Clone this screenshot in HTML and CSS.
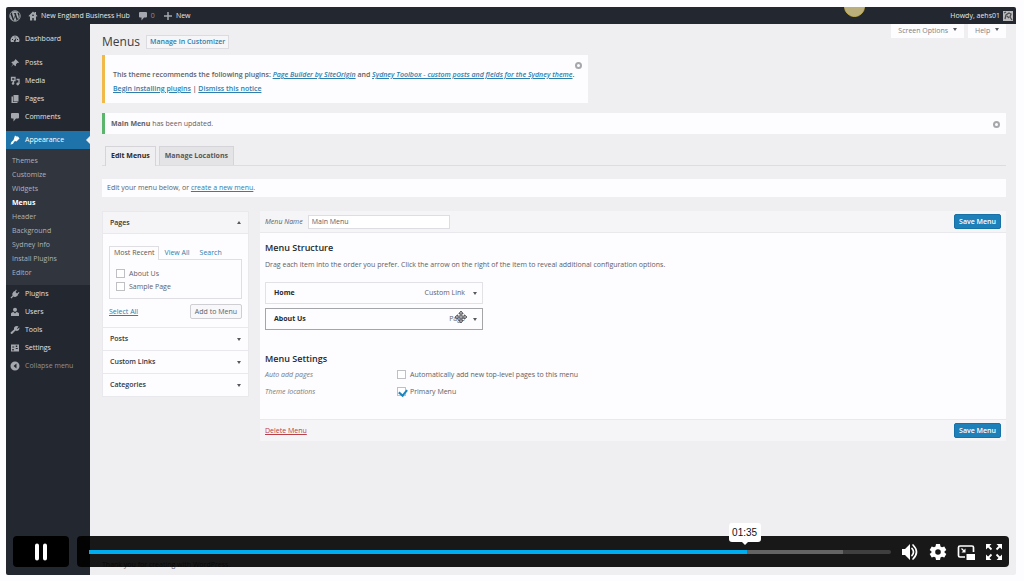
FILE: index.html
```html
<!DOCTYPE html>
<html lang="en">
<head>
<meta charset="utf-8">
<title>Menus - New England Business Hub</title>
<meta name="viewport" content="width=device-width, initial-scale=1">
<link rel="stylesheet" href="styles.css">
</head>
<body>
<div class="player">
  <header class="adminbar">
    <a class="bar-item bar-logo" href="#" aria-label="WordPress"><svg class="logo" viewBox="0 0 20 20"><circle cx="10" cy="10" r="8.800" fill="none" stroke="currentColor" stroke-width="1.400"/><path fill="currentColor" d="M2.600 7l4 10.800A8 8 0 0 1 2.600 7zM4 5a7.500 7.500 0 0 1 11.500-.8c-1.500.3-1.500 1.800-.7 3 .9 1.400 1 2.600.5 4.300l-1 3-3-9h1V4.800H7.500v.7h1l1.300 3.500-1.900 5.500-3-9h1V5zM10.200 11l2.500 6.500q-2.500 1-5 .2zM17 6.500q1.800 6.500-3 10.300l2.500-7.200q.6-1.600.5-3.100z"/></svg></a>
    <a class="bar-item bar-site" href="#"><svg class="ico" viewBox="0 0 20 20"><path fill="currentColor" fill-rule="evenodd" d="M10 1l3 3V2h3v5l3 3-1.500 1.500L16 10v9h-4.500v-5h-3v5H4v-9l-1.500 1.500L1 10zM10 6.500L8.500 8v2h3V8z"/></svg>New England Business Hub</a>
    <a class="bar-item bar-comments" href="#"><svg class="ico" viewBox="0 0 20 20"><path fill="currentColor" d="M4 2h12q2 0 2 2v7q0 2-2 2h-4l-5 6v-6H4q-2 0-2-2V4q0-2 2-2z"/></svg><span class="dim">0</span></a>
    <a class="bar-item" href="#"><svg class="ico" viewBox="0 0 20 20"><path fill="currentColor" d="M8.500 2h3v6.500H18v3h-6.500V18h-3v-6.500H2v-3h6.500z"/></svg>New</a>
    <a class="bar-item bar-user" href="#">Howdy, aehs01<svg class="avatar" viewBox="0 0 10 10"><path fill="#b9b9bb" d="M0 0h10v10H0z"/><path d="M2 8l1-4 3-2 2 1-1 3 2 3M1 2l2-1M4 5l2 2" fill="none" stroke="#4b4e52" stroke-width="1.300"/></svg></a>
    <span class="pointer-dot"></span>
  </header>
  <div class="shell">
    <nav class="sidebar">
      <a class="nav" href="#"><svg class="ico" viewBox="0 0 20 20"><path fill="currentColor" fill-rule="evenodd" d="M10 3a9 9 0 0 1 8 13H2A9 9 0 0 1 10 3zM9 5v2h2V5zM4 10v2h2v-2zm10 0v2h2v-2zM13 7l-4 5a2 2 0 1 0 2.500 1.500z"/></svg>Dashboard</a>
      <a class="nav gap-top" href="#"><svg class="ico" viewBox="0 0 20 20"><path fill="currentColor" d="M11 2l7 7-2 1-1-.5-3 3q.5 2.500-1.500 4L7 13l-5 5 4-6-3.500-3.500q2-2 4.500-1.500l3-3z"/></svg>Posts</a>
      <a class="nav" href="#"><svg class="ico" viewBox="0 0 20 20"><path d="M3 3h7v6H3zM13 7h5v9M7 10v5" fill="none" stroke="currentColor" stroke-width="2.600"/><circle cx="6" cy="15" r="2.500" fill="currentColor"/><circle cx="15.500" cy="16" r="2.800" fill="currentColor"/></svg>Media</a>
      <a class="nav" href="#"><svg class="ico" viewBox="0 0 20 20"><path fill="currentColor" d="M7 2h10v13H7zM3 5h3v11h9v2H3z"/></svg>Pages</a>
      <a class="nav" href="#"><svg class="ico" viewBox="0 0 20 20"><path fill="currentColor" d="M4 2h12q2 0 2 2v7q0 2-2 2h-4l-5 6v-6H4q-2 0-2-2V4q0-2 2-2z"/></svg>Comments</a>
      <a class="nav current" href="#"><svg class="ico" viewBox="0 0 20 20"><path fill="currentColor" d="M10 1l3 2h3l3 4-3 3-3 3-3-1-2 2q-1 4-6 5H1q0-5 6-9l1-3z"/></svg>Appearance</a>
      <div class="submenu">
        <a href="#">Themes</a><a href="#">Customize</a><a href="#">Widgets</a><a class="active" href="#">Menus</a><a href="#">Header</a><a href="#">Background</a><a href="#">Sydney Info</a><a href="#">Install Plugins</a><a href="#">Editor</a>
      </div>
      <a class="nav" href="#"><svg class="ico" viewBox="0 0 20 20"><path fill="currentColor" d="M12 1l1.500 1.500L11 6l3 3 3.500-3L19 7.500 15.500 11l1 1-2 1.500q-4 4-8 1.500L3 19l-2-2 4-3.500Q3 9 7 5.500L8.500 4l1 1z"/></svg>Plugins</a>
      <a class="nav" href="#"><svg class="ico" viewBox="0 0 20 20"><circle cx="10" cy="5.500" r="4" fill="currentColor"/><path fill="currentColor" d="M2 18v-5q1-3 5-3l3 3 3-3q4 0 5 3v5z"/></svg>Users</a>
      <a class="nav" href="#"><svg class="ico" viewBox="0 0 20 20"><path fill="currentColor" d="M17 3l-3 4 1 1 4-3q0 6-5 7l-3-1-7 7q-3 0-3-3l7-6q-1-7 6-7z"/></svg>Tools</a>
      <a class="nav" href="#"><svg class="ico" viewBox="0 0 20 20"><path fill="currentColor" fill-rule="evenodd" d="M2 3h16v14H2zM4.500 7v2h4V7zm7-2v3h3V5zm0 5v2h4v-2zm-7 2v3h3v-3z"/></svg>Settings</a>
      <button class="nav collapse" type="button"><svg class="ico" viewBox="0 0 20 20"><path fill="currentColor" fill-rule="evenodd" d="M10 1a9 9 0 1 1 0 18 9 9 0 0 1 0-18zm3 4l-6 5 6 5z"/></svg>Collapse menu</button>
    </nav>
    <main class="content">
      <div class="title-row">
        <h1>Menus</h1>
        <a class="title-action" href="#">Manage in Customizer</a>
        <div class="screen-meta">
          <button type="button">Screen Options <i class="tri"></i></button>
          <button type="button">Help <i class="tri"></i></button>
        </div>
      </div>

      <section class="notice notice-warn">
        <div>
          <p>This theme recommends the following plugins: <a href="#"><em>Page Builder by SiteOrigin</em></a> and <a href="#"><em>Sydney Toolbox - custom posts and fields for the Sydney theme</em></a>.</p>
          <p><a href="#">Begin installing plugins</a> | <a href="#">Dismiss this notice</a></p>
        </div>
        <button class="dismiss" type="button" aria-label="Dismiss"></button>
      </section>

      <section class="notice notice-ok">
        <p><strong>Main Menu</strong> has been updated.</p>
        <button class="dismiss" type="button" aria-label="Dismiss"></button>
      </section>

      <div class="tabs">
        <a class="tab tab-on" href="#">Edit Menus</a>
        <a class="tab" href="#">Manage Locations</a>
      </div>

      <p class="hint">Edit your menu below, or <a href="#">create a new menu</a>.</p>

      <div class="columns">
        <aside class="accordion">
          <button class="acc-head acc-open" type="button">Pages<i class="tri tri-up"></i></button>
          <div class="acc-body">
            <div class="subtabs">
              <a class="subtab subtab-on" href="#">Most Recent</a>
              <a class="subtab" href="#">View All</a>
              <a class="subtab" href="#">Search</a>
            </div>
            <div class="checks">
              <label><input type="checkbox">About Us</label>
              <label><input type="checkbox">Sample Page</label>
            </div>
            <div class="acc-actions">
              <a href="#">Select All</a>
              <button class="btn" type="button">Add to Menu</button>
            </div>
          </div>
          <button class="acc-head" type="button">Posts<i class="tri"></i></button>
          <button class="acc-head" type="button">Custom Links<i class="tri"></i></button>
          <button class="acc-head" type="button">Categories<i class="tri"></i></button>
        </aside>

        <form class="editor">
          <div class="editor-bar editor-top">
            <label for="menu-name">Menu Name</label>
            <input id="menu-name" class="name-input" type="text" value="Main Menu">
            <button class="btn btn-primary" type="button">Save Menu</button>
          </div>
          <div class="editor-body">
            <h2>Menu Structure</h2>
            <p class="desc">Drag each item into the order you prefer. Click the arrow on the right of the item to reveal additional configuration options.</p>
            <ul class="items">
              <li><strong>Home</strong><span>Custom Link</span><i class="tri"></i></li>
              <li class="hovered"><strong>About Us</strong><span>Page</span><i class="tri"></i>
                <svg class="move" viewBox="0 0 14 14"><path d="M7 0l2.500 3H8v3h3V4.500L14 7l-3 2.500V8H8v3h1.500L7 14l-2.500-3H6V8H3v1.500L0 7l3-2.500V6h3V3H4.500z" fill="#b4b4b8" stroke="#4a4a4e" stroke-width="1"/></svg></li>
            </ul>
            <h2>Menu Settings</h2>
            <div class="setting"><span class="setting-name">Auto add pages</span><label><input type="checkbox">Automatically add new top-level pages to this menu</label></div>
            <div class="setting"><span class="setting-name">Theme locations</span><label><input type="checkbox" checked>Primary Menu</label></div>
          </div>
          <div class="editor-bar editor-bottom">
            <a class="delete" href="#">Delete Menu</a>
            <button class="btn btn-primary" type="button">Save Menu</button>
          </div>
        </form>
      </div>
      <footer class="credit">Thank you for creating with WordPress.</footer>
    </main>
  </div>

  <div class="controls">
    <button class="play" type="button" aria-label="Pause"><svg viewBox="0 0 14 18"><path d="M3 2.500v13M11 2.500v13" stroke="#fff" stroke-width="4" stroke-linecap="round"/></svg></button>
    <div class="control-bar">
      <div class="track"><div class="buffered"></div><div class="played"></div><span class="time">01:35</span></div>
      <button type="button" aria-label="Volume"><svg viewBox="0 0 18 18"><path fill="#fff" d="M1 6h3l5-5v16l-5-5H1z"/><path d="M11 5.500q3 3.500 0 7M12 2q7 7 0 14" fill="none" stroke="#fff" stroke-width="1.700" stroke-linecap="round"/></svg></button>
      <button type="button" aria-label="Settings"><svg viewBox="0 0 18 18"><path fill="#fff" fill-rule="evenodd" d="M7 1h4l.5 2.500 1.500.8 2.300-.8 2 3.500-1.800 1.500v1L17.300 11l-2 3.500-2.300-.8-1.500.8L11 17H7l-.5-2.500-1.500-.8-2.300.8-2-3.500 1.800-1.500v-1L.7 7l2-3.500 2.300.8 1.500-.8zM9 6.200a2.800 2.800 0 1 0 0 5.600 2.800 2.800 0 0 0 0-5.600z"/></svg></button>
      <button type="button" aria-label="Picture in picture"><svg viewBox="0 0 18 18"><path d="M8 14H3q-1.500 0-1.500-1.500v-8Q1.500 3 3 3h12q1.500 0 1.500 1.500V9" fill="none" stroke="#fff" stroke-width="1.700"/><path fill="#fff" d="M9.500 11H18v6H9.500zM8.500 5.500v4h-4z"/><path d="M4.500 5.500l3 3" stroke="#fff" stroke-width="1.200"/></svg></button>
      <button type="button" aria-label="Fullscreen"><svg viewBox="0 0 18 18"><path d="M2.500 2.500l4 4M15.500 2.500l-4 4M2.500 15.500l4-4M15.500 15.500l-4-4" stroke="#fff" stroke-width="1.800"/><path fill="#fff" d="M1 1h5.500L1 6.500zM17 1v5.500L11.500 1zM1 17v-5.500L6.500 17zM17 17h-5.500l5.500-5.500z"/></svg></button>
    </div>
  </div>
</div>
</body>
</html>
```
FILE: styles.css
```css
* { box-sizing: border-box; }
body {
  margin: 0;
  padding: 7px 8px 6px 6px;
  min-height: 100vh;
  display: flex;
  background: #fdfcff;
  color: #5e6165;
  font: 7px/14px "Open Sans", "Noto Sans", sans-serif;
}
h1, h2, p, ul { margin: 0; padding: 0; }
button, input { font: inherit; color: inherit; }
button { border: 0; background: none; padding: 0; }
a { color: #2d7fae; }
i.tri {
  flex: none;
  display: inline-block;
  border: 2px solid transparent;
  border-top: 3px solid #55585c;
  border-bottom: 0;
}
i.tri-up { border-top: 0; border-bottom: 3px solid #55585c; }

.player {
  position: relative;
  flex: 1;
  display: flex;
  flex-direction: column;
  border-radius: 2px;
  overflow: hidden;
  background: #efeef0;
}

.adminbar {
  position: relative;
  display: flex;
  align-items: center;
  height: 17px;
  padding: 0 3px;
  background: #23272f;
  color: #e6e7e9;
}
.bar-item { display: flex; align-items: center; color: inherit; text-decoration: none; }
.bar-site { margin-left: 7px; }
.bar-comments { margin-left: 8px; }
.bar-comments + .bar-item { margin-left: 8px; }
.bar-user { margin-left: auto; gap: 3px; }
.dim { color: #8d9197; }
.ico { width: 10px; height: 10px; margin-right: 4px; color: #a4a8ae; flex: none; }
.bar-item .ico { margin-right: 3px; }
.logo { width: 12px; height: 12px; color: #a4a8ae; }
.avatar { width: 10px; height: 10px; }
.pointer-dot {
  position: absolute;
  top: -11px;
  left: 83%;
  width: 21px;
  height: 21px;
  border: 1px solid #c9b24a;
  border-radius: 50%;
  background: #b9ae7c;
}

.shell { flex: 1; display: flex; }
.sidebar {
  width: 84px;
  flex: none;
  padding-top: 6px;
  background: #23272f;
  color: #e6e7e9;
}
.nav {
  position: relative;
  display: flex;
  align-items: center;
  width: 100%;
  height: 18px;
  padding-left: 4px;
  color: #e0e1e4;
  text-decoration: none;
}
.nav .ico { margin-right: 5px; }
.gap-top { margin-top: 6px; }
.current { margin-top: 5px; background: #1d73aa; color: #fff; }
.current .ico { color: #fff; }
.current::after {
  content: "";
  position: absolute;
  right: 0;
  border: 4px solid transparent;
  border-right-color: #efeef0;
  border-left: 0;
}
.collapse { color: #8f9399; }
.submenu { display: flex; flex-direction: column; padding: 5px 0 5px 6px; background: #31353e; }
.submenu a { color: #afb3b9; text-decoration: none; }
.submenu .active { color: #fff; font-weight: 700; }

.content { flex: 1; min-width: 0; display: flex; flex-direction: column; padding: 0 10px 3px 12px; }
.title-row { display: flex; align-items: center; height: 31px; padding-top: 5px; }
h1 { font-size: 12px; line-height: 18px; font-weight: 400; color: #3a3d42; }
.title-action {
  margin-left: 6px;
  padding: 0 3px;
  line-height: 12px;
  border: 1px solid #dcdbdf;
  background: #f6f5f8;
  font-weight: 600;
  text-decoration: none;
}
.screen-meta { margin: -5px 0 0 auto; align-self: flex-start; display: flex; gap: 4px; }
.screen-meta button {
  height: 14px;
  padding: 0 7px;
  background: #fdfcff;
  color: #7d8085;
}
.screen-meta .tri { margin: 0 0 2px 3px; }

.notice {
  display: flex;
  justify-content: space-between;
  background: #fdfcff;
  border-left: 3px solid #f0b94a;
}
.notice-warn { width: 53%; min-width: 486px; padding: 13px 6px 7px 8px; min-height: 48px; font-weight: 600; }
.notice-ok { margin-top: 10px; padding: 4px 6px 3px; align-items: center; border-color: #5cb56c; }
.notice-warn .dismiss { margin-top: -6px; }
.notice-warn p { white-space: nowrap; }
.dismiss { flex: none; width: 7px; height: 7px; border: 2px solid #a6a8ac; border-radius: 50%; }

.tabs { display: flex; gap: 3px; margin-top: 12px; padding-left: 3px; border-bottom: 1px solid #dddce0; }
.tab {
  padding: 1px 5px;
  border: 1px solid #d5d4d8;
  border-bottom: 0;
  background: #e4e3e6;
  color: #55585c;
  line-height: 16px;
  font-weight: 700;
  text-decoration: none;
}
.tab-on { margin-bottom: -1px; background: #efeef0; color: #26292d; }

.hint { margin-top: 13px; padding: 2px 5px; background: #fdfcff; }

.columns { display: flex; align-items: flex-start; gap: 11px; margin-top: 14px; }
.accordion { width: 147px; flex: none; background: #fdfcff; border: 1px solid #e9e8ec; }
.acc-head {
  display: flex;
  align-items: center;
  justify-content: space-between;
  width: 100%;
  height: 23px;
  padding: 0 7px;
  border-top: 1px solid #e9e8ec;
  color: #33363b;
  font-weight: 600;
}
.acc-open { height: 22px; border: 0; border-bottom: 1px solid #e9e8ec; background: #f5f5f7; }
.acc-body { padding: 12px 6px 8px; }
.subtabs { display: flex; }
.subtab { padding: 0 4px; border: 1px solid transparent; border-bottom: 0; line-height: 12px; text-decoration: none; }
.subtab-on { margin-bottom: -1px; border-color: #dfdee2; background: #fdfcff; color: #55585c; }
.checks { display: flex; flex-direction: column; padding: 7px 6px 5px; border: 1px solid #dfdee2; }
label { display: flex; align-items: center; }
input[type="checkbox"] {
  appearance: none;
  width: 9px;
  height: 9px;
  margin: 0 4px 0 0;
  border: 1px solid #bfc0c4;
  background: #fff;
}
input[type="checkbox"]:checked::after {
  content: "";
  display: block;
  width: 4px;
  height: 6px;
  margin-left: 2px;
  border: solid #1d84c0;
  border-width: 0 2px 2px 0;
  transform: rotate(40deg);
}
.checks label { height: 13px; }
.acc-actions { display: flex; align-items: center; justify-content: space-between; margin-top: 5px; }
.btn {
  height: 15px;
  padding: 0 4px;
  border: 1px solid #cfcfd3;
  border-radius: 2px;
  background: #f8f7fa;
}
.btn-primary { margin-left: auto; border-color: #1770a6; background: #1d80b8; color: #fff; font-weight: 600; }

.editor { flex: 1; min-width: 0; background: #fdfcff; }
.editor-bar { display: flex; align-items: center; height: 22px; padding: 0 5px; background: #f5f5f7; }
.editor-top { border-bottom: 1px solid #e9e8ec; font-style: italic; }
.editor-top .btn { font-style: normal; }
.editor-bottom { border-top: 1px solid #e9e8ec; }
.name-input {
  width: 142px;
  height: 14px;
  margin-left: 5px;
  padding: 0 3px;
  border: 1px solid #dedde1;
  background: #fff;
  font-style: normal;
}
.editor-body { padding: 8px 5px 19px; }
h2 { font-size: 9px; line-height: 14px; font-weight: 600; color: #26292d; }
.desc { margin-top: 3px; }
.items { display: flex; flex-direction: column; gap: 4px; width: 218px; margin: 10px 0 22px; list-style: none; }
.items li {
  position: relative;
  display: flex;
  align-items: center;
  height: 22px;
  padding: 0 5px 0 8px;
  border: 1px solid #e2e1e5;
}
.items strong { flex: 1; font-weight: 700; color: #26292d; }
.items .tri { margin-left: 8px; }
.items .hovered { border-color: #a3a5a9; }
.move { position: absolute; right: 15px; top: 2px; width: 12px; height: 12px; }
.setting { display: flex; height: 17px; align-items: center; }
.setting-name { width: 132px; font-style: italic; color: #77797e; }
.delete { color: #b8404a; }
.credit { margin-top: auto; }

.controls {
  position: absolute;
  left: 7px;
  right: 7px;
  bottom: 8px;
  display: flex;
  gap: 8px;
  height: 31px;
}
.play { width: 56px; border-radius: 4px; background: #000; }
.play svg { display: block; width: 14px; height: 18px; margin: 0 auto; }
.control-bar {
  flex: 1;
  display: flex;
  align-items: center;
  gap: 10px;
  padding: 0 6px 0 12px;
  border-radius: 4px;
  background: rgba(0, 0, 0, 0.9);
}
.control-bar button { width: 18px; height: 18px; }
.control-bar svg { display: block; width: 18px; height: 18px; }
.track { position: relative; flex: 1; height: 4px; border-radius: 2px; background: #3f3f3f; }
.buffered, .played { position: absolute; left: 0; top: 0; height: 4px; }
.buffered { width: 94%; background: #646464; }
.played { width: 82%; background: #00adef; }
.time {
  position: absolute;
  left: 82%;
  bottom: 12px;
  width: 32px;
  margin-left: -18px;
  border-radius: 3px;
  background: #fff;
  color: #111;
  font: 10px/19px "Liberation Sans", Arial, sans-serif;
  text-align: center;
}
.time::after {
  content: "";
  position: absolute;
  left: 13px;
  top: 19px;
  border: 3px solid transparent;
  border-top-color: #fff;
  border-bottom: 0;
}
```
